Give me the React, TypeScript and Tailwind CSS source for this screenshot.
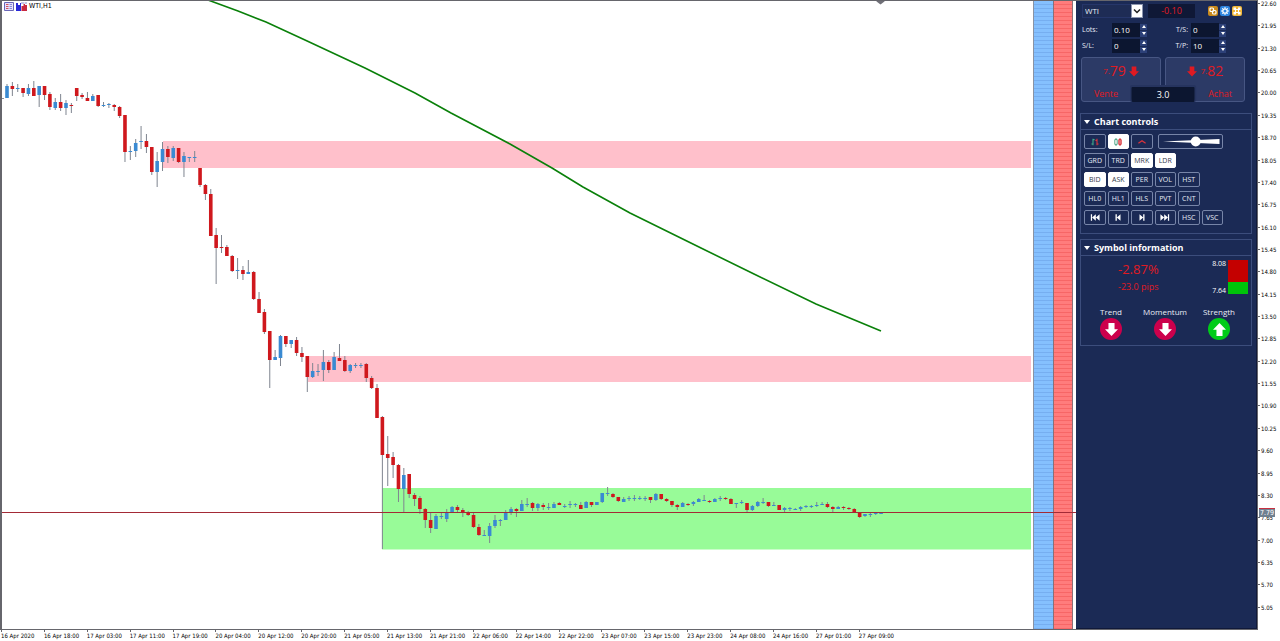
import React, { useState } from "react";

type Candle = [high: number, top: number, bottom: number, low: number, dir: 0 | 1];

const UP = 1;
const DOWN = 0;

const candles: Candle[] = [
  [84, 86, 98, 98, UP], [82, 86, 89, 96, DOWN], [84, 88, 89, 92, UP], [88, 88, 93, 97, DOWN],
  [84, 88, 94, 96, UP], [81, 88, 96, 96, DOWN], [86, 86, 95, 107, UP], [86, 86, 95, 100, DOWN],
  [92, 94, 107, 110, DOWN], [98, 102, 108, 110, UP], [94, 102, 108, 111, DOWN], [100, 103, 108, 115, UP],
  [103, 105, 106, 113, DOWN], [88, 88, 96, 101, DOWN], [93, 95, 97, 99, DOWN], [92, 98, 101, 101, DOWN],
  [94, 96, 101, 101, UP], [95, 95, 106, 107, DOWN], [102, 105, 106, 107, UP], [103, 104, 105, 108, UP],
  [104, 105, 107, 111, DOWN], [106, 107, 116, 118, DOWN], [115, 115, 152, 162, DOWN], [146, 151, 152, 160, UP],
  [139, 143, 151, 157, UP], [126, 141, 142, 149, UP], [134, 141, 147, 153, DOWN], [147, 147, 172, 175, DOWN],
  [152, 161, 172, 187, UP], [142, 149, 162, 171, UP], [146, 149, 157, 163, DOWN], [146, 148, 158, 161, UP],
  [148, 148, 162, 163, DOWN], [152, 156, 162, 177, UP], [157, 157, 158, 162, UP], [151, 157, 158, 162, UP],
  [168, 168, 185, 187, DOWN], [184, 185, 194, 200, DOWN], [189, 194, 236, 236, DOWN], [228, 235, 248, 284, DOWN],
  [235, 247, 248, 253, DOWN], [245, 247, 256, 256, DOWN], [255, 256, 271, 272, DOWN], [258, 270, 271, 279, UP],
  [266, 270, 274, 280, DOWN], [260, 272, 274, 274, UP], [271, 272, 299, 300, DOWN], [292, 299, 313, 313, DOWN],
  [309, 312, 332, 334, DOWN], [331, 331, 360, 388, DOWN], [350, 357, 360, 360, UP], [335, 336, 358, 366, UP],
  [336, 336, 344, 347, DOWN], [340, 340, 344, 348, UP], [337, 340, 353, 356, DOWN], [347, 353, 357, 362, DOWN],
  [356, 356, 377, 392, DOWN], [363, 371, 377, 378, UP], [364, 371, 372, 376, UP], [350, 362, 370, 381, UP],
  [360, 362, 370, 373, DOWN], [352, 357, 370, 370, UP], [344, 358, 361, 361, DOWN], [356, 360, 371, 372, DOWN],
  [364, 365, 371, 373, UP], [363, 365, 366, 368, UP], [363, 365, 366, 368, UP], [363, 364, 378, 382, DOWN],
  [376, 378, 388, 389, DOWN], [384, 388, 418, 418, DOWN], [416, 417, 455, 549, DOWN], [436, 454, 458, 486, DOWN],
  [452, 457, 465, 478, DOWN], [464, 465, 489, 502, DOWN], [468, 475, 489, 512, UP], [474, 474, 494, 498, DOWN],
  [493, 495, 499, 506, DOWN], [496, 498, 509, 514, DOWN], [508, 509, 520, 528, DOWN], [513, 520, 528, 533, DOWN],
  [514, 516, 529, 529, UP], [513, 516, 517, 519, UP], [509, 513, 519, 522, UP], [506, 507, 513, 513, UP],
  [505, 507, 510, 513, DOWN], [508, 510, 512, 517, DOWN], [511, 512, 515, 516, DOWN], [513, 515, 527, 528, DOWN],
  [524, 527, 535, 536, DOWN], [530, 535, 536, 536, UP], [523, 526, 536, 543, UP], [515, 520, 526, 528, UP],
  [519, 520, 521, 526, UP], [510, 512, 520, 520, UP], [507, 509, 512, 515, UP], [508, 509, 511, 517, DOWN],
  [500, 504, 511, 511, UP], [498, 504, 505, 507, UP], [502, 503, 508, 511, DOWN], [503, 504, 508, 511, UP],
  [503, 505, 507, 510, DOWN], [503, 507, 508, 510, UP], [502, 504, 508, 508, UP], [502, 503, 505, 505, DOWN],
  [504, 506, 507, 508, UP], [501, 504, 505, 508, UP], [503, 504, 505, 507, UP], [502, 505, 509, 509, DOWN],
  [501, 502, 508, 508, UP], [502, 502, 505, 507, DOWN], [502, 502, 505, 505, UP], [493, 493, 502, 503, UP],
  [487, 493, 494, 496, UP], [493, 494, 497, 498, DOWN], [497, 497, 501, 502, DOWN], [497, 499, 502, 502, UP],
  [496, 498, 499, 501, UP], [495, 498, 499, 501, UP], [496, 498, 499, 500, UP], [496, 498, 499, 501, UP],
  [497, 497, 500, 503, DOWN], [493, 494, 500, 501, UP], [494, 494, 499, 500, DOWN], [498, 499, 501, 502, DOWN],
  [501, 501, 505, 507, DOWN], [504, 505, 507, 510, DOWN], [502, 503, 507, 507, UP], [503, 504, 505, 506, DOWN],
  [501, 502, 504, 506, UP], [498, 499, 502, 502, UP], [495, 500, 501, 501, UP], [500, 501, 502, 503, DOWN],
  [498, 499, 502, 502, UP], [496, 498, 499, 501, UP], [497, 498, 499, 500, DOWN], [498, 499, 504, 504, DOWN],
  [503, 503, 504, 508, UP], [500, 502, 503, 504, UP], [503, 503, 510, 513, DOWN], [505, 506, 510, 511, UP],
  [501, 502, 506, 507, UP], [498, 502, 503, 504, UP], [502, 502, 506, 507, DOWN], [502, 505, 506, 506, UP],
  [505, 505, 510, 510, DOWN], [507, 508, 510, 512, UP], [507, 508, 509, 511, UP], [508, 509, 510, 510, UP],
  [506, 507, 509, 511, UP], [505, 506, 507, 508, UP], [505, 506, 507, 508, UP], [502, 505, 506, 507, UP],
  [502, 504, 505, 505, UP], [502, 504, 507, 508, DOWN], [506, 507, 509, 512, DOWN], [506, 507, 509, 509, UP],
  [506, 507, 508, 510, DOWN], [507, 508, 509, 510, DOWN], [508, 509, 512, 512, DOWN], [512, 512, 517, 518, DOWN],
  [514, 514, 516, 517, UP], [513, 514, 515, 517, UP], [512, 513, 514, 515, UP], [512, 513, 514, 514, UP],
];

const prices = [
  "22.60", "21.95", "21.30", "20.65", "20.00", "19.35", "18.70", "18.05", "17.40", "16.75",
  "16.10", "15.45", "14.80", "14.15", "13.50", "12.85", "12.20", "11.55", "10.90", "10.25",
  "9.60", "8.95", "8.30", "7.65", "7.00", "6.35", "5.70", "5.05",
];

const times = [
  "16 Apr 2020", "16 Apr 18:00", "17 Apr 03:00", "17 Apr 11:00", "17 Apr 19:00", "20 Apr 04:00",
  "20 Apr 12:00", "20 Apr 20:00", "21 Apr 05:00", "21 Apr 13:00", "21 Apr 21:00", "22 Apr 06:00",
  "22 Apr 14:00", "22 Apr 22:00", "23 Apr 07:00", "23 Apr 15:00", "23 Apr 23:00", "24 Apr 08:00",
  "24 Apr 16:00", "27 Apr 01:00", "27 Apr 09:00",
];

function PriceChart() {
  return (
    <svg className="block h-full w-full" viewBox="2 1 1031 628" preserveAspectRatio="none" role="img" aria-label="WTI hourly candles">
      <rect x="163" y="141" width="868" height="27" fill="#ffc0cb" />
      <rect x="308" y="356" width="723" height="26" fill="#ffc0cb" />
      <rect x="382" y="488" width="649" height="61.5" fill="#98fb98" />
      <path d="M2 98.500h2" stroke="#8a8f9a" />
      {candles.map(([high, top, bottom, low, dir], i) => {
        const x = 5.2 + i * 5.3625;
        return (
          <g key={i}>
            <rect x={x + 1.300} y={high} width="1" height={Math.max(low - high, 1)} fill="#7f8590" />
            <rect x={x} y={top} width="3.600" height={Math.max(bottom - top, 1)} fill={dir === UP ? "#3a8ad2" : "#cf181d"} />
          </g>
        );
      })}
      <polyline
        points="208,0 238,11 266,22 305,40 365,68 415,93 451,113 510,144 552,168 583,187 630,213 701,248 754,274 816,304 881,331"
        fill="none"
        stroke="#0a800a"
        strokeWidth="1.6"
      />
      <path d="M876.5 0h8v1.500l-4 3-4-3z" fill="#707078" />
    </svg>
  );
}

function Spinner({ label, value, id }: { label: string; value: string; id: string }) {
  const [text, setText] = useState(value);
  const step = (by: number) => setText((t) => String(Number(t) + by));
  return (
    <div className="flex items-center">
      <label htmlFor={id} className="w-[30px] group-data-[side=right]:pr-[3px] group-data-[side=right]:text-right">
        {label}
      </label>
      <input
        id={id}
        value={text}
        onChange={(e) => setText(e.target.value)}
        className="h-[14px] w-[28px] bg-[#0c1630] pl-[2px] text-[8px] leading-[14px] text-white outline-none"
      />
      <span className="flex flex-col gap-px">
        <button type="button" aria-label={`Increase ${label}`} onClick={() => step(1)} className="flex h-[6px] w-[7px] items-center justify-center bg-[#2c4078]">
          <svg viewBox="0 0 4 3" className="h-[3px] w-[4px]"><path d="M0 3 2 0l2 3z" fill="#fff" /></svg>
        </button>
        <button type="button" aria-label={`Decrease ${label}`} onClick={() => step(-1)} className="flex h-[6px] w-[7px] items-center justify-center bg-[#2c4078]">
          <svg viewBox="0 0 4 3" className="h-[3px] w-[4px]"><path d="M0 0h4L2 3z" fill="#fff" /></svg>
        </button>
      </span>
    </div>
  );
}

function BlockArrow({ up, className }: { up?: boolean; className: string }) {
  return (
    <svg viewBox="0 0 12 12" className={className} fill="currentColor" aria-hidden="true">
      <path d={up ? "M6 0 12 6.200H8.800V12H3.200V6.200H0z" : "M6 12 0 5.800h3.200V0h5.600v5.800H12z"} />
    </svg>
  );
}

function Section({ title, children }: { title: string; children: React.ReactNode }) {
  return (
    <section className="mx-[4px] border border-[#3c4d7c]">
      <h2 className="flex h-[16px] items-center gap-[4px] border-b border-[#3c4d7c] pl-[3px] text-[9px] leading-[14px] font-bold text-white">
        <svg viewBox="0 0 6 4" className="h-[4px] w-[6px]" aria-hidden="true"><path d="M0 0h6L3 4z" fill="#fff" /></svg>
        {title}
      </h2>
      {children}
    </section>
  );
}

const icons: Record<string, React.ReactNode> = {
  bars: (
    <svg viewBox="0 0 12 10" className="h-[8px] w-[10px]" fill="none" strokeWidth="1.400">
      <path d="M3.500 1v8M1.500 7.500h2M3.500 2h2" stroke="#3fa88a" />
      <path d="M8.500 1v8M6.500 3h2M8.500 7.500h2" stroke="#d8333c" />
    </svg>
  ),
  candles: (
    <svg viewBox="0 0 12 10" className="h-[8px] w-[10px]" fill="none" strokeWidth="1.200">
      <path d="M3.500 0v2M3.500 8v2M2 2h3v6H2z" stroke="#4fa487" />
      <path d="M8.500 0v2M8.500 8v2M7 2h3v6H7z" stroke="#d8333c" fill="#ef8a8a" />
    </svg>
  ),
  line: (
    <svg viewBox="0 0 12 10" className="h-[8px] w-[10px]" fill="none">
      <path d="M1.500 6.500 6 3.500l4.500 3" stroke="#d8333c" strokeWidth="1.700" />
    </svg>
  ),
  first: <svg viewBox="0 0 12 8" className="h-[7px] w-[10px]" fill="#fff"><path d="M1 0h1.500v8H1zM7 0v8L2.500 4zM11.500 0v8L7 4z" /></svg>,
  prev: <svg viewBox="0 0 12 8" className="h-[7px] w-[10px]" fill="#fff"><path d="M3 0h1.600v8H3zM9 0v8L4.500 4z" /></svg>,
  next: <svg viewBox="0 0 12 8" className="h-[7px] w-[10px]" fill="#fff"><path d="M7.400 0H9v8H7.400zM3 0v8l4.500-4z" /></svg>,
  last: <svg viewBox="0 0 12 8" className="h-[7px] w-[10px]" fill="#fff"><path d="M9.500 0H11v8H9.500zM5 0v8l4.500-4zM.5 0v8L5 4z" /></svg>,
};

const rows: string[][] = [
  ["bars", "candles", "line"],
  ["GRD", "TRD", "MRK", "LDR"],
  ["BID", "ASK", "PER", "VOL", "HST"],
  ["HL0", "HL1", "HLS", "PVT", "CNT"],
  ["first", "prev", "next", "last", "HSC", "VSC"],
];

function ChartControls() {
  const [on, setOn] = useState(["candles", "MRK", "LDR", "BID", "ASK"]);
  const toggle = (k: string) => setOn((s) => (s.includes(k) ? s.filter((v) => v !== k) : [...s, k]));
  return (
    <div className="flex flex-col gap-[4px] px-[3px] pt-[4px] pb-[8px] text-[7px] leading-[10px]">
      {rows.map((row, r) => (
        <div key={r} className="grid w-[139px] grid-cols-6 gap-[2px]">
          {row.map((k) => (
            <button
              key={k}
              type="button"
              aria-label={k}
              aria-pressed={on.includes(k)}
              onClick={() => toggle(k)}
              className="flex h-[15px] items-center justify-center rounded-[2px] border border-[#7785a8] aria-pressed:border-white aria-pressed:bg-white aria-pressed:text-[#333a4a]"
            >
              {icons[k] ?? k}
            </button>
          ))}
          {r === 0 && (
            <label className="relative col-span-3 ml-[3px] flex h-[15px] items-center rounded-[2px] border border-[#7785a8]">
              <svg viewBox="0 0 64 13" preserveAspectRatio="none" className="h-full w-full" aria-hidden="true">
                <path d="M4 6.500 61 4v5z" fill="#fff" />
                <circle cx="37" cy="6.500" r="5" fill="#fff" />
              </svg>
              <input type="range" aria-label="Chart zoom" defaultValue="58" className="absolute inset-0 h-full w-full opacity-0" />
            </label>
          )}
        </div>
      ))}
    </div>
  );
}

const gauges = [
  { name: "Trend", up: false },
  { name: "Momentum", up: false },
  { name: "Strength", up: true },
];

function TradePanel() {
  return (
    <aside className="w-[181px] shrink-0 border-r border-b border-[#10193a] bg-[#1b2a55] pt-[3px] font-['Open_Sans','Noto_Sans',sans-serif] text-[7px] leading-[10px] text-[#e8ecf6]">
      <div className="flex h-[14px] items-center pr-[14px] pl-[6px]">
        <div className="relative flex h-[14px] w-[61px] bg-[#1e2c55]">
          <select aria-label="Symbol" className="w-full appearance-none border border-[#26366a] pl-[2px] text-[8px] leading-[12px]">
            <option>WTI</option>
          </select>
          <span className="pointer-events-none absolute inset-y-0 right-0 flex w-[12px] items-center justify-center border border-[#8c96b0] bg-white">
            <svg viewBox="0 0 8 5" className="h-[5px] w-[8px]" fill="none"><path d="m1 .5 3 3 3-3" stroke="#222" strokeWidth="1.500" /></svg>
          </span>
        </div>
        <output className="ml-[5px] h-[14px] w-[47px] bg-[#0f1836] text-center text-[9px] leading-[14px] text-[#e01a22]">-0.10</output>
        <div className="ml-auto flex gap-[2px]">
          <button type="button" aria-label="Link" className="size-[10px] rounded-[2px] bg-[#c98a1c]">
            <svg viewBox="0 0 10 10" fill="none" stroke="#fff" strokeWidth="1.200"><rect x="2" y="2" width="3.500" height="3.500" rx="1" /><rect x="4.500" y="4.500" width="3.500" height="3.500" rx="1" /></svg>
          </button>
          <button type="button" aria-label="Settings" className="size-[10px] rounded-[2px] bg-[#2f86e0]">
            <svg viewBox="0 0 10 10" fill="none" stroke="#fff"><circle cx="5" cy="5" r="2.200" strokeWidth="1.300" /><path d="M5 1v1.500M5 7.500V9M1 5h1.500M7.500 5H9M2.200 2.200l1 1M6.800 6.800l1 1M7.800 2.200l-1 1M3.200 6.800l-1 1" /></svg>
          </button>
          <button type="button" aria-label="Layout" className="size-[10px] rounded-[2px] bg-[#f0b73a]">
            <svg viewBox="0 0 10 10" fill="#fff"><path d="M1.500 1.500H4V4H1.500zM6 1.500h2.500V4H6zM1.500 6H4v2.500H1.500zM6 6h2.500v2.500H6z" /><path d="M3.500 3.500h3v3h-3z" fill="none" stroke="#fff" /></svg>
          </button>
        </div>
      </div>

      <div className="mt-[5px] flex gap-[14px] pl-[6px]">
        <div className="group flex flex-col gap-[2px]" data-side="left">
          <Spinner id="lots" label="Lots:" value="0.10" />
          <Spinner id="sl" label="S/L:" value="0" />
        </div>
        <div className="group flex flex-col gap-[2px]" data-side="right">
          <Spinner id="ts" label="T/S:" value="0" />
          <Spinner id="tp" label="T/P:" value="10" />
        </div>
      </div>

      <div className="relative mt-[4px] mr-[11px] ml-[5px] grid grid-cols-2 gap-[4px] text-[#e01a22]">
        <button type="button" className="flex h-[45px] flex-col justify-between rounded-[3px] border border-[#475683] bg-[#2c3a66] pt-[4px] pb-[2px]">
          <span className="flex items-center self-center text-[14px] leading-[18px]">
            <small className="text-[8px]">7.</small>79
            <BlockArrow className="ml-[3px] h-[11px] w-[10px]" />
          </span>
          <span className="w-[48px] text-[9px] leading-[10px]">Vente</span>
        </button>
        <button type="button" className="flex h-[45px] flex-col justify-between rounded-[3px] border border-[#475683] bg-[#2c3a66] pt-[4px] pb-[2px]">
          <span className="flex items-center self-center text-[14px] leading-[18px]">
            <BlockArrow className="mr-[4px] h-[11px] w-[10px]" />
            <small className="text-[8px]">7.</small>82
          </span>
          <span className="w-[48px] self-end text-[9px] leading-[10px]">Achat</span>
        </button>
        <input
          aria-label="Spread"
          defaultValue="3.0"
          className="absolute bottom-0 left-1/2 h-[17px] w-[67px] -translate-x-1/2 rounded-[3px] border-2 border-b-0 border-[#26345f] bg-[#0c1630] text-center text-[9px] leading-[14px] text-white"
        />
      </div>

      <div className="mt-[11px] flex flex-col gap-[5px]">
        <Section title="Chart controls">
          <ChartControls />
        </Section>
        <Section title="Symbol information">
          <div className="flex justify-between pt-[4px] pr-[3px] pl-[37px]">
            <div className="text-center text-[#e01a22]">
              <p className="text-[13px] leading-[18px]">-2.87%</p>
              <p className="text-[9px] leading-[18px]">-23.0 pips</p>
            </div>
            <div className="flex gap-[2px]">
              <div className="flex flex-col justify-between pb-[2px] text-[7px] leading-[7px] text-white">
                <span>8.08</span>
                <span>7.64</span>
              </div>
              <div className="flex h-[34px] w-[20px] flex-col">
                <div className="h-[22px] bg-[#c40000]" />
                <div className="h-[12px] bg-[#00c40a]" />
              </div>
            </div>
          </div>
          <div className="grid w-[165px] grid-cols-3 pt-[10px] pb-[5px] pl-[3px] text-[8px] leading-[12px]">
            {gauges.map((g) => (
              <div key={g.name} className="flex flex-col items-center">
                <span>{g.name}</span>
                <span className={g.up ? "flex size-[22px] items-center justify-center rounded-full bg-[#00cc18]" : "flex size-[22px] items-center justify-center rounded-full bg-[#cc004c]"}>
                  <BlockArrow up={g.up} className="size-[13px] text-white" />
                </span>
              </div>
            ))}
          </div>
        </Section>
      </div>
    </aside>
  );
}

export default function App() {
  return (
    <div className="flex h-screen min-h-[420px] overflow-hidden bg-white font-['DejaVu_Sans_Condensed','DejaVu_Sans',sans-serif] text-[6px] leading-[7px] text-black">
      <div className="flex min-w-0 flex-1 flex-col">
        <main className="relative flex min-h-0 flex-1 border border-l-2 border-[#66666c]">
          <div className="min-w-0 flex-1">
            <PriceChart />
          </div>
          <div className="w-[20px] border-l border-[#8a93a3] bg-[repeating-linear-gradient(#85c0fe_0_3px,#76aef0_3px_4px)]" />
          <div className="mr-[3px] w-[20px] border-x border-[#8a7078] bg-[repeating-linear-gradient(#ff7c7c_0_3px,#f76666_3px_4px)]" />
          <TradePanel />
          <header className="absolute top-px left-[2px] flex items-center gap-[2px]">
            <svg viewBox="0 0 10 9" className="h-[9px] w-[10px]" aria-hidden="true">
              <path d="M.5.5h9v8h-9z" fill="#e6e2fa" stroke="#6a66b8" />
              <path d="M2 2.500h2.500M2 4.500h2.500M2 6.500h2.500" stroke="#d8505c" />
              <path d="M5.500 2.500H8M5.500 4.500H8M5.500 6.500H8" stroke="#8a8ae0" />
            </svg>
            <svg viewBox="0 0 11 9" className="h-[9px] w-[11px]" aria-hidden="true">
              <path d="M0 1h2v2h2V1h1v8H0z" fill="#2a2ad8" />
              <path d="M5.500 4h2V2H9v1h2v6H5.500z" fill="#c82840" />
              <path d="M5 1h3M8.500 1H11" stroke="#8888c8" />
            </svg>
            <h1 className="text-[7px] leading-[9px]">WTI,H1</h1>
          </header>
          <div className="pointer-events-none absolute top-[81.3%] right-[181px] left-0 h-px bg-[#a32a36]" />
        </main>
        <ol className="flex h-[11px]" aria-label="Time axis">
          {times.map((t) => (
            <li key={t} className="flex w-[3.41%] shrink-0 flex-col whitespace-nowrap">
              <span className="ml-px h-[2px] w-px bg-[#66666c]" />
              <span className="pl-px">{t}</span>
            </li>
          ))}
        </ol>
      </div>
      <div className="relative w-[22px] shrink-0">
        <ol className="flex h-[95.3%] flex-col justify-between" aria-label="Price axis">
          {prices.map((p) => (
            <li key={p} className="flex items-center gap-px">
              <span className="h-px w-[2px] bg-[#66666c]" />
              {p}
            </li>
          ))}
        </ol>
        <span className="absolute top-[79.3%] left-px h-[9px] w-[16px] border-t border-[#c83040] bg-[#708090] text-center text-[7px] leading-[8px] text-white">7.79</span>
      </div>
    </div>
  );
}
